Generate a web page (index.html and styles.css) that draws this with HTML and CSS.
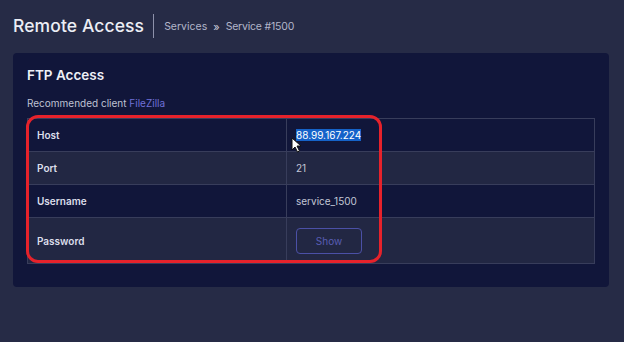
FILE: index.html
```html
<!DOCTYPE html>
<html lang="en">
<head>
    <meta charset="UTF-8">
    <title>Remote Access</title>
    <link rel="stylesheet" href="styles.css">
</head>
<body>
    <div class="page-header">
        <h1>Remote Access</h1>
        <div class="crumbs">
            <span>Services</span>
            <span class="sep">&raquo;</span>
            <span>Service #1500</span>
        </div>
    </div>

    <div class="card">
        <h2>FTP Access</h2>
        <p class="hint">Recommended client <a href="#">FileZilla</a></p>

        <div class="table-wrap">
            <table class="access-table">
                <tr>
                    <th>Host</th>
                    <td><span class="selected">88.99.167.224</span></td>
                </tr>
                <tr>
                    <th>Port</th>
                    <td>21</td>
                </tr>
                <tr>
                    <th>Username</th>
                    <td>service_1500</td>
                </tr>
                <tr class="tall">
                    <th>Password</th>
                    <td><button class="btn-outline">Show</button></td>
                </tr>
            </table>

            <!-- annotation drawn over the screenshot -->
            <div class="marker"></div>
            <svg class="cursor" width="11" height="16" viewBox="0 0 11 16">
                <path d="M1 1 L1 13 L4 10 L6.5 15 L8.5 14 L6 9 L10 9 Z" fill="#fff" stroke="#111" stroke-width="1"/>
            </svg>
        </div>
    </div>
</body>
</html>
```

FILE: styles.css
```css
body {
    margin: 0;
    padding: 0 15px 0 13px;
    background-color: #262b46;
    font-family: 'Inter', 'Noto Sans', sans-serif;
    color: #d9dbe7;
}
.page-header {
    display: flex;
    align-items: center;
    height: 52px;
    padding-bottom: 1px;
}
h1 {
    margin: 0;
    font-size: 17.5px;
    font-weight: 500;
    color: #eceef5;
    padding-right: 9px;
    margin-right: 10px;
    border-right: 1px solid #8d91aa;
    line-height: 24px;
    letter-spacing: 0.1px;
}
.crumbs {
    font-size: 10.5px;
    color: #b3b6ca;
    display: flex;
    gap: 6px;
    padding-top: 2px;
}
.crumbs .sep {
    color: #c9cbdb;
    font-size: 11px;
}
.crumbs span:last-child {
    letter-spacing: -0.2px;
}
.card {
    background-color: #11163a;
    border-radius: 4px;
    padding: 12px 14px 23px 14px;
}
h2 {
    margin: 0;
    font-size: 13.5px;
    font-weight: 600;
    color: #eef0f7;
    line-height: 20px;
}
.hint {
    margin: 11px 0 8px;
    font-size: 10px;
    color: #bfc2d3;
    line-height: 14px;
}
.hint a {
    color: #6f70d8;
    text-decoration: none;
}
.table-wrap {
    position: relative;
}
.access-table {
    width: 100%;
    border-collapse: collapse;
    border: 1px solid #383d5b;
    font-size: 10px;
}
.access-table tr {
    height: 33px;
}
.access-table tr:nth-child(even) {
    background-color: #222743;
}
.access-table tr.tall {
    height: 46px;
}
.access-table th,
.access-table td {
    border-top: 1px solid #383d5b;
    padding: 0 9px;
    text-align: left;
}
.access-table th {
    width: 240px;
    border-right: 1px solid #383d5b;
    font-weight: 600;
    color: #dcdeea;
}
.access-table td {
    color: #c3c6d6;
}
.selected {
    background-color: #1562c9;
    color: #ffffff;
}
.btn-outline {
    background: transparent;
    border: 1px solid #4b50a6;
    border-radius: 4px;
    color: #585db3;
    font-family: 'Inter', sans-serif;
    font-size: 10px;
    width: 66px;
    height: 26px;
    cursor: pointer;
}
.marker {
    position: absolute;
    left: -1px;
    top: -3px;
    width: 350px;
    height: 142px;
    border: 3.5px solid #e6222b;
    border-radius: 12px;
    pointer-events: none;
}
.cursor {
    position: absolute;
    left: 264px;
    top: 19px;
}
```
